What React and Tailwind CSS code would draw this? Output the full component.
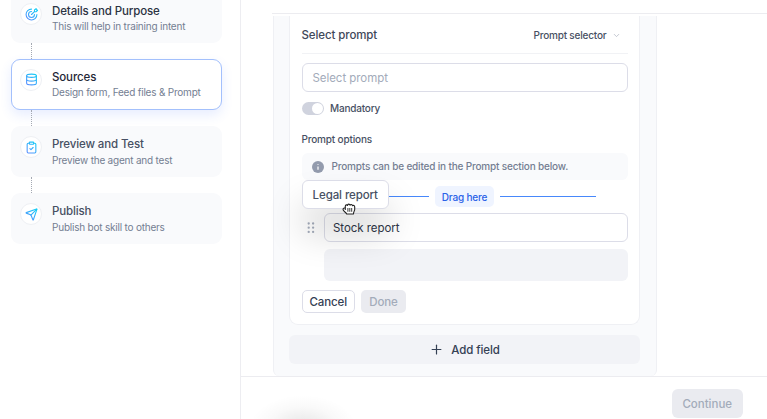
import React from "react";
import { Database, ClipboardCheck, Send, ChevronDown, Plus } from "lucide-react";

function TargetIcon() {
  return (
    <svg width="13" height="13" viewBox="0 0 24 24" fill="none" stroke="url(#step)" strokeWidth="2" strokeLinecap="round" strokeLinejoin="round">
      <path d="M12 2A10 10 0 1 0 22 12" />
      <path d="M12 6.500A5.500 5.500 0 1 0 17.500 12" />
      <path d="M12 12l5.500-5.500V3.600l3-2.600.6 2.400 2.400.6-2.800 2.800h-3" />
    </svg>
  );
}

const steps = [
  { title: "Details and Purpose", text: "This will help in training intent", icon: <TargetIcon />, first: true },
  { title: "Sources", text: "Design form, Feed files & Prompt", icon: <Database size={13} stroke="url(#step)" strokeWidth={2} />, active: true },
  { title: "Preview and Test", text: "Preview the agent and test", icon: <ClipboardCheck size={13} stroke="url(#step)" strokeWidth={2} /> },
  { title: "Publish", text: "Publish bot skill to others", icon: <Send size={13} stroke="url(#step)" strokeWidth={2} /> },
];

function Step({ step, last }) {
  return (
    <>
      <div
        className={
          "flex h-[51px] w-[210.5px] shrink-0 rounded-[9px] border pl-[8px] " +
          (step.first ? "pt-[10.5px] " : "pt-[9px] ") +
          (step.active
            ? "border-[#a3c0fc] bg-white shadow-[0_5px_12px_rgba(60,110,255,0.12)]"
            : "border-transparent bg-[#f9fafc]")
        }
      >
        <div className="flex size-[22px] shrink-0 items-center justify-center rounded-full border border-[#eef0f4] bg-white">
          {step.icon}
        </div>
        <div className="ml-[10px] whitespace-nowrap">
          <div
            className={
              "text-[11.5px] font-medium leading-[17px] tracking-[-0.13px] " +
              (step.first ? "h-[15.500px] text-[#2b3343]" : step.active ? "h-[16.500px] text-[#1f2737]" : "h-[16.500px] text-[#475063]")
            }
          >
            {step.title}
          </div>
          <div className="h-[15px] text-[10px] leading-[15px] tracking-[-0.21px] text-[#747e92]">{step.text}</div>
        </div>
      </div>
      {!last && (
        <div className="flex h-[16.3px] shrink-0 pl-[20px]">
          <div className="w-0 border-l border-dotted border-[#a4a9b3]" />
        </div>
      )}
    </>
  );
}

function GripDots() {
  return (
    <svg width="8" height="12" viewBox="0 0 8 12" fill="#a4acbb">
      {[1.5, 5.7, 9.9].map((y) => (
        <React.Fragment key={y}>
          <circle cx="1.7" cy={y} r="1.15" />
          <circle cx="6.1" cy={y} r="1.15" />
        </React.Fragment>
      ))}
    </svg>
  );
}

function GrabCursor() {
  return (
    <svg className="absolute left-[39px] top-[22px]" width="14" height="12" viewBox="0 0 14 12" fill="#fff" stroke="#222" strokeWidth="1.1" strokeLinejoin="round" strokeLinecap="round">
      <path d="M3.300 5.200V3.200c0-1.500 1.700-1.800 2.200-.7.200-1.800 2.200-1.800 2.500-.3.500-1.100 2.200-.9 2.400.5.900-.7 2.300-.1 2.300 1.200v2.300c0 1.600-1.100 2.300-1.300 4.800H4.700C4.300 9.300 1 8.300 1 6.300c0-1.100 1.200-1.600 2.300-1.100v1.300" />
      <path d="M5.900 5.400v3M7.800 5.400v3M9.700 5.400v3" strokeWidth="0.9" />
    </svg>
  );
}

export default function App() {
  return (
    <div className="relative flex h-[419px] w-[767px] overflow-hidden bg-white font-['Inter',sans-serif]">
      <svg width="0" height="0" className="absolute">
        <defs>
          <linearGradient id="step" gradientUnits="userSpaceOnUse" x1="20" y1="2" x2="4" y2="22">
            <stop offset="0" stopColor="#12cdf5" />
            <stop offset="1" stopColor="#5a8dff" />
          </linearGradient>
        </defs>
      </svg>

      <aside className="flex h-full w-[241px] shrink-0 flex-col border-r border-[#ededf1] pl-[11px]">
        <div className="-mt-[8.5px] flex flex-col">
          {steps.map((s, i) => (
            <Step key={s.title} step={s} last={i === steps.length - 1} />
          ))}
        </div>
      </aside>

      <main className="flex h-full min-w-0 flex-1 flex-col">
        <div className="ml-[31px] h-[14px] shrink-0 border-b border-[#ececf0]" />
        <div className="mt-[2px] h-[360px] shrink-0 pl-[32px]">
          <div className="flex h-full w-[384px] flex-col rounded-b-[6px] border-x border-[#eff0f4] bg-[#f9fafc] pl-[15px] pr-[16px]">
            <section className="flex h-[309px] shrink-0 flex-col rounded-b-[9px] border-x border-b border-[#eff0f4] bg-white px-[11.5px]">
              <div className="flex h-[38px] shrink-0 items-center justify-between border-b border-[#f1f2f5] pr-[7px] pt-[2px]">
                <span className="text-[11.500px] font-medium tracking-[-0.1px] text-[#3f485a]">Select prompt</span>
                <span className="flex items-center gap-[5px] text-[10px] font-medium tracking-[-0.19px] text-[#475063]">
                  Prompt selector
                  <ChevronDown size={9} color="#b0b6c2" />
                </span>
              </div>
              <div className="mt-[9px] flex h-[29px] shrink-0 items-center rounded-[6px] border border-[#dcdde8] px-[10px] pt-[1.500px] text-[11.500px] tracking-[-0.05px] text-[#a3abba]">
                Select prompt
              </div>
              <div className="mt-[10px] flex h-[13px] shrink-0 items-center gap-[6px]">
                <span className="flex h-[13px] w-[22.500px] items-center justify-end rounded-full bg-[#d0d3de] pr-[1px]">
                  <span className="size-[11px] rounded-full bg-white" />
                </span>
                <span className="text-[10px] font-medium tracking-[-0.19px] text-[#475063]">Mandatory</span>
              </div>
              <div className="mt-[17px] h-[14px] shrink-0 text-[10px] font-medium leading-[14px] tracking-[-0.17px] text-[#475063]">Prompt options</div>
              <div className="mt-[7px] flex h-[27px] shrink-0 items-center gap-[8px] rounded-[6px] bg-[#f9fafc] pl-[10px]">
                <svg width="12" height="12" viewBox="0 0 12 12">
                  <circle cx="6" cy="6" r="6" fill="#939bad" />
                  <path d="M6 5.400v3.300M6 3.200v.8" stroke="#fff" strokeWidth="1.200" />
                </svg>
                <span className="text-[10px] font-medium tracking-[-0.175px] text-[#747e92]">Prompts can be edited in the Prompt section below.</span>
              </div>
              <div className="relative flex h-[33px] shrink-0 items-center pl-[87.5px]">
                <div className="h-px w-[40px] bg-[#4788fb]" />
                <div className="mx-[6px] flex h-[21px] w-[59px] items-center justify-center rounded-[5px] bg-[#eff4ff] pt-[1px] text-[10px] font-medium tracking-[-0.19px] text-[#2b62e8]">
                  Drag here
                </div>
                <div className="h-px w-[96px] bg-[#4788fb]" />
                <div className="absolute left-[0px] top-[0px] z-10 flex h-[29px] w-[87.5px] items-center justify-center rounded-[6px] border border-[#dcdde8] bg-white pt-[2px] text-[11.500px] font-medium tracking-[-0.1px] text-[#475063] shadow-[0_24px_36px_0px_rgba(0,0,0,0.17)]">
                  Legal report
                  <GrabCursor />
                </div>
              </div>
              <div className="flex h-[29px] shrink-0 items-center">
                <div className="flex w-[22.5px] justify-center pr-[3px]">
                  <GripDots />
                </div>
                <div className="flex h-[29px] flex-1 items-center rounded-[6px] border border-[#dcdde8] pl-[8px] pt-[2px] text-[11.500px] tracking-[-0.05px] text-[#2f3748]">
                  Stock report
                </div>
              </div>
              <div className="ml-[22.5px] mt-[7px] h-[32px] shrink-0 rounded-[6px] bg-[#f2f3f7]" />
              <div className="mt-[9px] flex h-[23px] shrink-0 gap-[6px] text-[11.500px] font-medium tracking-[-0.1px]">
                <button className="w-[53.5px] rounded-[5px] border border-[#dcdde8] bg-white pt-[2px] text-[#344054]">Cancel</button>
                <button className="w-[45px] rounded-[5px] bg-[#eaebf0] pt-[2px] text-[#a3abba]">Done</button>
              </div>
            </section>
            <button className="mt-[10px] flex h-[29px] shrink-0 items-center justify-center gap-[7px] rounded-[6px] bg-[#f2f3f7] text-[11.500px] font-medium tracking-[-0.1px] text-[#344054]">
              <Plus size={15} strokeWidth={1.900} />
              <span className="pt-[2px]">Add field</span>
            </button>
          </div>
        </div>
        <footer className="z-20 flex h-[43px] shrink-0 justify-end border-t border-[#ececf0] bg-white bg-[radial-gradient(ellipse_54px_34px_at_62px_52px,rgba(0,0,0,0.11),rgba(0,0,0,0.025)_65%,transparent)] pr-[24px] pt-[12px]">
          <button className="h-[29px] w-[71.500px] rounded-[6px] bg-[#eaebf0] pt-[2px] text-[11.500px] font-medium text-[#a3abba]">Continue</button>
        </footer>
      </main>
    </div>
  );
}
